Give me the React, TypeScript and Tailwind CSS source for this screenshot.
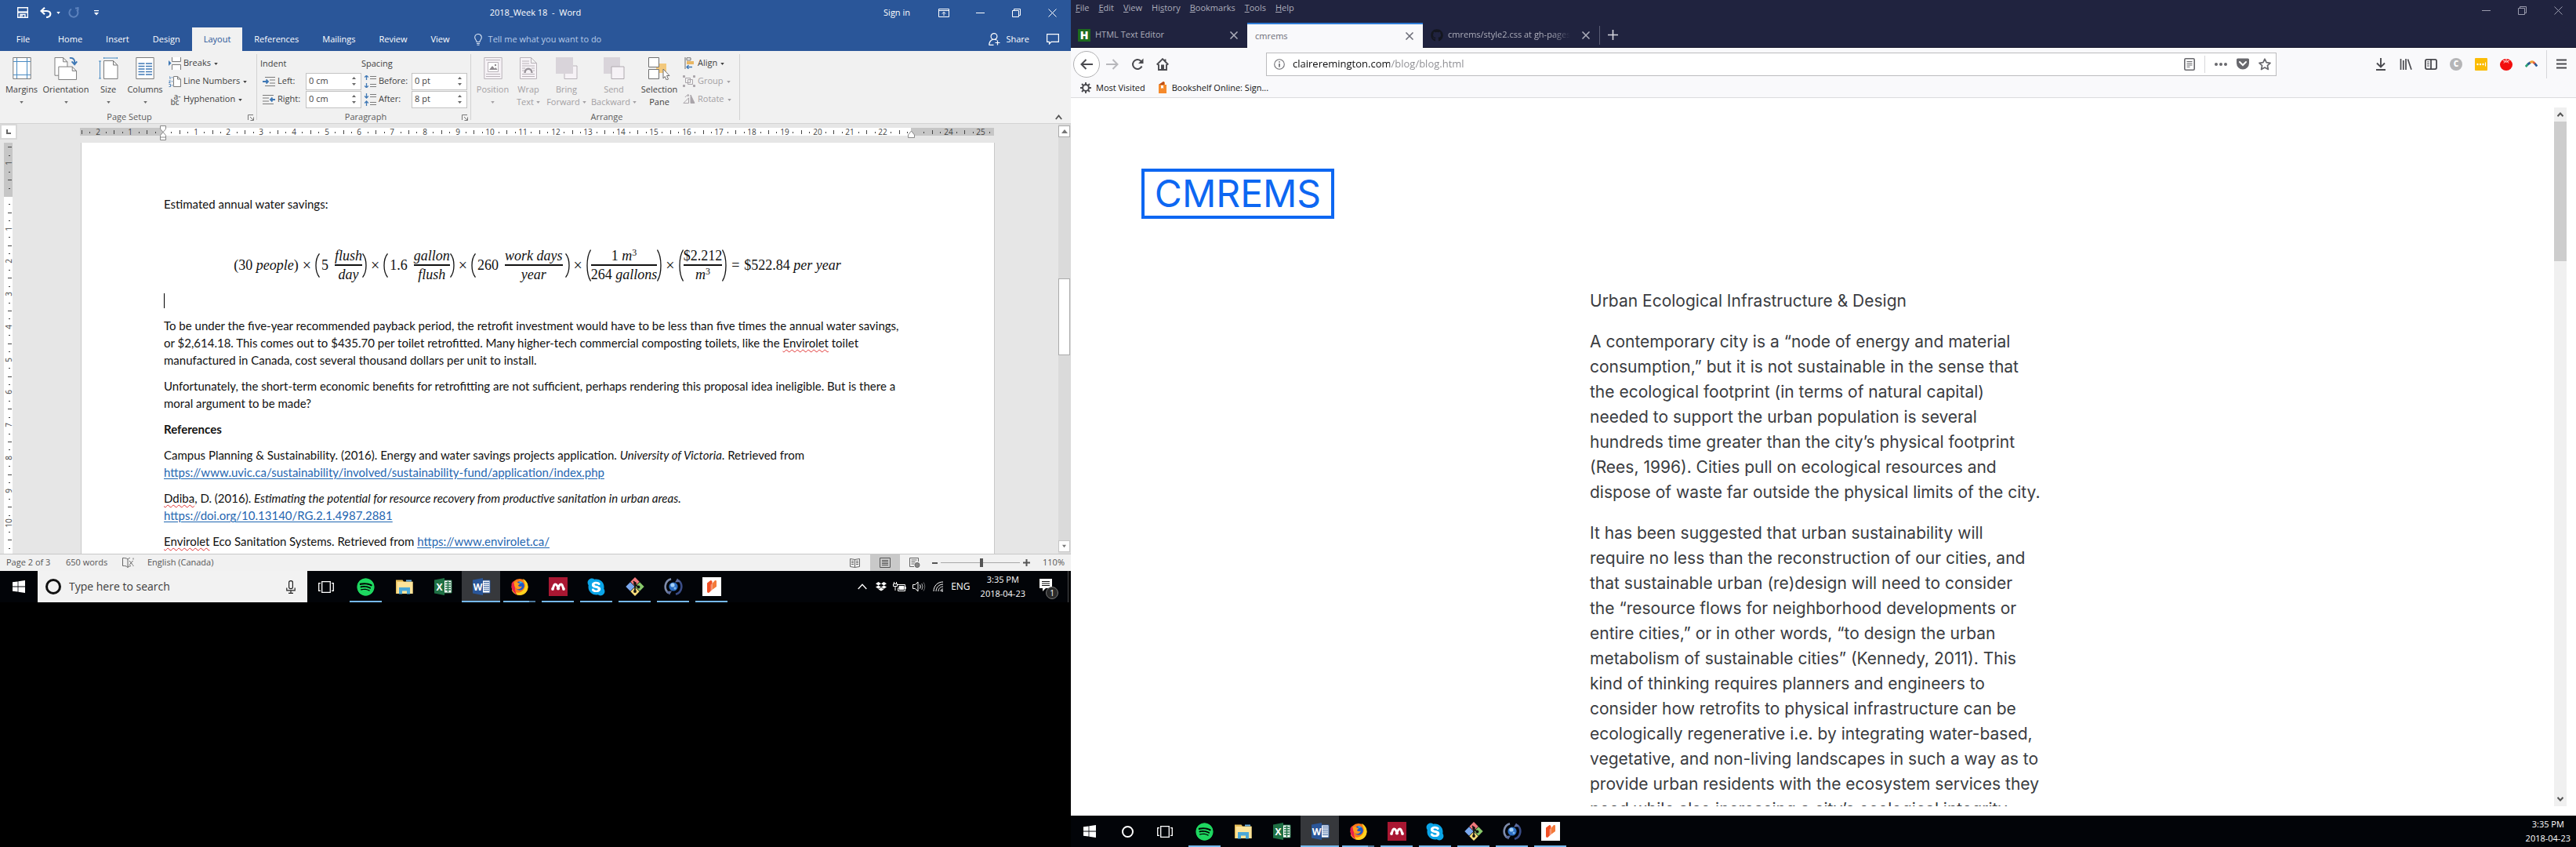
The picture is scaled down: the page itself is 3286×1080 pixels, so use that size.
import React from 'react';
import { FaSpotify, FaSkype, FaGithub } from 'react-icons/fa';

type IconProps = { className?: string };

/* ---------- shared glyphs ---------- */

const CaretDown = ({ className = '' }: IconProps) => (
  <svg viewBox="0 0 6 4" className={`inline-block h-[3px] w-[5px] shrink-0 ${className}`} fill="currentColor"><path d="M0 0h6L3 4z" /></svg>
);
const MinimizeIcon = () => (
  <svg viewBox="0 0 11 11" className="h-[11px] w-[11px]" stroke="currentColor"><path d="M0 5.5h11" /></svg>
);
const RestoreIcon = () => (
  <svg viewBox="0 0 11 11" className="h-[11px] w-[11px]" stroke="currentColor" fill="none"><path d="M.5 2.5h8v8h-8zM2.5 2.5v-2h8v8h-2" /></svg>
);
const CloseIcon = ({ className = 'h-[11px] w-[11px]' }: IconProps) => (
  <svg viewBox="0 0 11 11" className={className} stroke="currentColor" fill="none"><path d="M.5.5l10 10M10.5.5l-10 10" /></svg>
);

/* ---------- taskbar ---------- */

const WindowsLogo = () => (
  <svg viewBox="0 0 16 16" className="h-4 w-4" fill="#fff"><path d="M0 2.3l6.6-.9v6.2H0zM7.4 1.3L16 0v7.6H7.4zM0 8.4h6.6v6.2L0 13.7zM7.4 8.4H16V16l-8.6-1.3z" /></svg>
);
const TaskViewIcon = () => (
  <svg viewBox="0 0 20 15" className="h-[15px] w-5" fill="none" stroke="#fff" strokeWidth="1.3"><path d="M4.7.7h10.6v13.6H4.7zM3 2.7H.7v9.6H3M17 2.7h2.3v9.6H17" /></svg>
);
const SpotifyIcon = () => (
  <span className="flex h-6 w-6 items-center justify-center"><FaSpotify className="h-[23px] w-[23px] rounded-full bg-black text-[#1ed760]" /></span>
);
const ExplorerIcon = () => (
  <svg viewBox="0 0 24 24" className="h-6 w-6"><path d="M1 3.5h8.5l1.5 2h11.5V21H1z" fill="#e8bf5a" /><path d="M2.5 6h20v15h-20z" fill="#fde49a" /><path d="M14 3.5h7v2h-7z" fill="#6fb6e8" /><path d="M5 13h14v8.5h-4v-4H9v4H5z" fill="#4aa8d8" /></svg>
);
const OfficeIcon = ({ letter, dark, lines }: { letter: string; dark: string; lines: React.ReactNode }) => (
  <svg viewBox="0 0 24 24" className="h-6 w-6"><path d="M13 4h10v16H13z" fill="#fff" stroke={dark} />{lines}<path d="M1 3.6L14 1v22L1 20.4z" fill={dark} /><text x="7.5" y="16.5" textAnchor="middle" fontSize="12" fontWeight="700" fill="#fff" fontFamily="Open Sans, sans-serif">{letter}</text></svg>
);
const ExcelIcon = () => (
  <OfficeIcon letter="X" dark="#1f7145" lines={<path d="M15 7h7M15 10h7M15 13h7M15 16h7M18.5 5v14" stroke="#1f7145" strokeWidth="1.4" />} />
);
const WordIcon = () => (
  <OfficeIcon letter="W" dark="#2a5699" lines={<path d="M15 6.5h7M15 9h7M15 11.5h7M15 14h7M15 16.5h7" stroke="#2a5699" strokeWidth="1.1" />} />
);
const FirefoxIcon = () => (
  <svg viewBox="0 0 24 24" className="h-6 w-6">
    <circle cx="12" cy="12.5" r="10.5" fill="#ff7a18" />
    <path d="M16 2c4 2 7 6 6.5 11C22 19 17 23 12 23c-5 0-9-3-10.3-7 4 4 9 5 13 2 4-3 5-8 3-12-.4-1.5-1-3-1.7-4z" fill="#ffd21e" />
    <path d="M1.6 8C1 14 3 20 9 22.5c-3-3-3-6-3-9C6 10 4 9 4 5 3 6 2 7 1.6 8z" fill="#e8214a" />
    <circle cx="12" cy="11" r="5.8" fill="#1e58c8" />
    <path d="M11 5.3c2 0 4 .6 5 2-1.5-.3-3 0-3.5 1z" fill="#2fb5ef" />
    <path d="M5 7c2-1.5 4-1 5 .5 1 0 2 .3 2 1-.5 1-2 1.5-2 2 .5 1.5 3 2 5 1-1 3-4 4.5-6.5 3.5C6 14 4.5 10.5 5 7z" fill="#ff9a1e" />
  </svg>
);
const MendeleyIcon = () => (
  <svg viewBox="0 0 24 24" className="h-6 w-6"><path d="M0 0h24v24H0z" fill="#a91732" /><path d="M5 14.5c1.500-1.500 1-5.500 3.500-5.500s2 3.500 3.500 3.500S13 9 15.500 9s2 4 3.500 5.500" fill="none" stroke="#fff" strokeWidth="3" /><circle cx="5" cy="15" r="1.900" fill="#fff" /><circle cx="12" cy="14.500" r="2.100" fill="#fff" /><circle cx="19" cy="15" r="1.900" fill="#fff" /></svg>
);
const SkypeIcon = () => (
  <span className="flex h-6 w-6 items-center justify-center"><FaSkype className="h-[25px] w-[23px] bg-[radial-gradient(#fff_8px,transparent_9px)] text-[#0aa5e8]" /></span>
);
const GitIcon = () => (
  <svg viewBox="0 0 24 24" className="h-6 w-6"><path d="M12 0l5.700 5.700L12 11.400 6.300 5.700z" fill="#f0797c" /><path d="M6 6.300l5.700 5.700L6 17.700.3 12z" fill="#7aa8ee" /><path d="M18 6.300l5.700 5.700-5.700 5.700-5.700-5.700z" fill="#88c86a" /><path d="M12 12.600l5.700 5.700L12 24l-5.700-5.700z" fill="#f7dc7a" /><path d="M10 5l2 2v12M12 9.500l4.500 3" stroke="#111" strokeWidth="1.600" fill="none" /><circle cx="12" cy="8" r="1.900" fill="#111" /><circle cx="12" cy="18" r="1.900" fill="#111" /><circle cx="16.500" cy="12.500" r="1.900" fill="#111" /></svg>
);
const SyncIcon = () => (
  <svg viewBox="0 0 24 24" className="h-6 w-6"><circle cx="12" cy="12" r="5.600" fill="#2c6fc4" /><circle cx="11" cy="10" r="2.600" fill="#a5d1f7" /><circle cx="14" cy="14" r="1.500" fill="#7db8ee" /><g fill="none" strokeWidth="2.600"><path d="M9 2.200A10.200 10.200 0 0 0 6 20.300" stroke="#7d8bab" /><path d="M15 21.800A10.200 10.200 0 0 0 18 3.700" stroke="#3a4c86" /></g><path d="M3 18l7-.5-3 5zM21 6l-7 .5 3-5z" fill="#5c6c9c" /></svg>
);
const NitroIcon = () => (
  <svg viewBox="0 0 24 24" className="h-6 w-6"><path d="M0 0h24v24H0z" fill="#fff" /><path d="M6 7.500l4.500-3.500c1.500 0 2 1 2 2v10L8 20c-1.500 0-2-.8-2-2z" fill="#f04e23" /><path d="M12.500 8v8l5.500-4V5.500C18 4 17 3.700 16 4z" fill="#f47a3a" /><path d="M12.500 8v8L10.500 18V9.500z" fill="#fff" opacity=".35" /></svg>
);

const APPS = [
  { name: 'Spotify', icon: <SpotifyIcon />, state: 'open' },
  { name: 'File Explorer', icon: <ExplorerIcon />, state: 'idle' },
  { name: 'Excel', icon: <ExcelIcon />, state: 'idle' },
  { name: 'Word', icon: <WordIcon />, state: 'active' },
  { name: 'Firefox', icon: <FirefoxIcon />, state: 'stacked' },
  { name: 'Mendeley', icon: <MendeleyIcon />, state: 'open' },
  { name: 'Skype', icon: <SkypeIcon />, state: 'open' },
  { name: 'Git', icon: <GitIcon />, state: 'open' },
  { name: 'Sync', icon: <SyncIcon />, state: 'open' },
  { name: 'Nitro', icon: <NitroIcon />, state: 'open' },
];

const TaskbarApps = () => (
  <div className="ml-0.5 flex">
    {APPS.map((a) => (
      <button key={a.name} aria-label={a.name} className={`relative flex h-10 w-[49px] items-center justify-center ${a.state === 'active' ? 'bg-[#36383c]' : ''}`}>
        {a.icon}
        {a.state === 'active' && <span className="absolute inset-x-0 bottom-0 h-0.5 bg-[#76b9ed]" />}
        {(a.state === 'open' || a.state === 'stacked') && <span className="absolute inset-x-1 bottom-0 h-0.5 bg-[#76b9ed]" />}
        {a.state === 'stacked' && <span className="absolute right-1 bottom-0 h-0.5 w-2 bg-[#4c789c]" />}
      </button>
    ))}
  </div>
);

const Clock = ({ className = '' }: IconProps) => (
  <div className={`text-center text-[11px] leading-[18px] text-white ${className}`}><div>3:35 PM</div><div>2018-04-23</div></div>
);

const LeftTaskbar = () => (
  <div className="flex h-10 items-center bg-[#020408]">
    <button aria-label="Start" className="flex h-10 w-12 items-center justify-center"><WindowsLogo /></button>
    <label className="flex h-10 w-[344px] items-center bg-[#f2f2f2] pr-[15px]">
      <span className="ml-2.5 h-5 w-5 shrink-0 rounded-full border-[3px] border-[#111]" />
      <input aria-label="Search" placeholder="Type here to search" className="ml-2.5 min-w-0 flex-1 bg-transparent text-sm text-[#333] outline-none placeholder:text-[#3c3c3c]" />
      <svg viewBox="0 0 12 17" className="h-[17px] w-3" fill="none" stroke="#222" strokeWidth="1.200"><rect x="3.600" y=".7" width="4.800" height="10" rx="2.200" /><path d="M.8 9.500v3.300h10.400V9.500M6 12.800v3.500M3 16.300h6" /></svg>
    </label>
    <button aria-label="Task view" className="flex h-10 w-12 items-center justify-center"><TaskViewIcon /></button>
    <TaskbarApps />
    <div className="ml-auto flex items-center text-white">
      <svg viewBox="0 0 12 8" className="h-2 w-3" fill="none" stroke="#fff" strokeWidth="1.300"><path d="M.7 7L6 1.200 11.300 7" /></svg>
      <svg viewBox="0 0 14 12" className="ml-[11px] h-3 w-3.5" fill="#fff"><path d="M3.500 0L7 2.200 3.500 4.400 0 2.200zM10.500 0L14 2.200l-3.500 2.200L7 2.200zM3.500 4.400L7 6.600 3.500 8.800 0 6.600zM10.500 4.400L14 6.600l-3.500 2.200L7 6.600zM3.500 9.400L7 7.300l3.500 2.100L7 11.600z" /></svg>
      <svg viewBox="0 0 17 12" className="ml-2 h-3 w-[17px]" fill="none" stroke="#fff"><path d="M5.500 3.500h10v8h-9v-4" /><path d="M16 6v3" strokeWidth="1.500" /><path d="M8 5.500h6v4H8z" fill="#fff" /><path d="M1.500 0v2M4.500 0v2M.5 2.500h5v3h-5zM3 5.500v5.500" /></svg>
      <svg viewBox="0 0 17 14" className="ml-2 h-3.5 w-[17px]" fill="none" stroke="#fff"><path d="M.5 4.500h3l3.500-3.500v12l-3.500-3.500h-3z" /><path d="M9.500 4.500q1.600 2.500 0 5" /><path d="M11.800 3q2.500 4 0 8" opacity=".7" /><path d="M14 1.500q3.500 5.500 0 11" opacity=".4" /></svg>
      <svg viewBox="0 0 14 14" className="ml-[9px] h-3.5 w-3.5" fill="none" stroke="#fff"><path d="M1 13C1 6 6 1 13 1M4 13c0-5 4-9 9-9M7 13c0-3.500 2.500-6 6-6" /><path d="M10 13c0-2 1-3 3-3" /><circle cx="12" cy="12.500" r="1" fill="#fff" stroke="none" /></svg>
      <span className="ml-[9px] text-xs">ENG</span>
      <Clock className="ml-[13px]" />
      <button aria-label="Notifications" className="relative ml-4 h-8 w-7">
        <svg viewBox="0 0 16 17" className="absolute top-1.5 left-0.5 h-[17px] w-4"><path d="M0 0h16v12H8l-4 4v-4H0z" fill="#fff" /><path d="M3 3.500h10M3 6h10M3 8.500h10" stroke="#111" /></svg>
        <span className="absolute right-0.5 bottom-0 flex h-4 w-4 items-center justify-center rounded-full border border-[#777] bg-[#2a2a2a] text-[10px] leading-none">1</span>
      </button>
      <span className="mr-[3px] ml-2.5 h-10 w-px bg-[#4a4a4a]" />
    </div>
  </div>
);

const RightTaskbar = () => (
  <div className="flex h-10 shrink-0 items-center bg-[#020408]">
    <button aria-label="Start" className="flex h-10 w-12 items-center justify-center"><WindowsLogo /></button>
    <button aria-label="Cortana" className="flex h-10 w-12 items-center justify-center"><span className="h-[15px] w-[15px] rounded-full border-2 border-white" /></button>
    <button aria-label="Task view" className="flex h-10 w-12 items-center justify-center"><TaskViewIcon /></button>
    <TaskbarApps />
    <Clock className="mr-[7px] ml-auto" />
  </div>
);

/* ---------- Word: title bar and tabs ---------- */

const WordTitleBar = () => (
  <div className="grid h-[35px] grid-cols-[1fr_auto_1fr] items-center pb-[3px] text-[11px] text-white">
    <div className="flex items-center pl-[22px]">
      <button aria-label="Save"><svg viewBox="0 0 14 14" className="h-3.5 w-3.5" fill="none" stroke="#fff" strokeWidth="1.400"><path d="M.7.700h12.600v12.600H.7z" /><path d="M.7 6.500h12.600" strokeWidth="2.200" /><path d="M4 13V9.500h6V13" /><path d="M6 10v2.500" /></svg></button>
      <button aria-label="Undo" className="ml-[15px] flex items-center"><svg viewBox="0 0 15 14" className="h-3.5 w-[15px]" fill="none" stroke="#fff" strokeWidth="2.200"><path d="M6 .8L1.500 5 6 9.200M2 5h6.500c7 0 6 8-.5 8" /></svg><CaretDown className="ml-1.5" /></button>
      <button aria-label="Redo" className="ml-2.5"><svg viewBox="0 0 14 14" className="h-3.5 w-3.5" fill="none" stroke="#5c82bd" strokeWidth="2"><path d="M9 1.500h4M12.500 0v4.500M11 3.500A5.500 5.500 0 1 1 4 2.500" /></svg></button>
      <button aria-label="Customize toolbar" className="ml-[19px]"><svg viewBox="0 0 6 7" className="h-[7px] w-1.5" fill="#fff"><path d="M0 0h6v1.200H0zM0 3h6L3 6.500z" /></svg></button>
    </div>
    <div className="whitespace-pre">2018_Week 18  -  Word</div>
    <div className="flex items-center justify-end pr-[18px]">
      <button className="mr-9">Sign in</button>
      <button aria-label="Ribbon options" className="mr-[34px]"><svg viewBox="0 0 14 11" className="h-[11px] w-3.5" fill="none" stroke="#fff"><path d="M.5.500h13v10H.5zM.5 2.500h13M7 9V4.500M4.800 6.500L7 4.300l2.200 2.200" /></svg></button>
      <button aria-label="Minimize" className="mr-[35px]"><MinimizeIcon /></button>
      <button aria-label="Restore" className="mr-[35px]"><RestoreIcon /></button>
      <button aria-label="Close"><CloseIcon /></button>
    </div>
  </div>
);

const WORD_TABS = ['Home', 'Insert', 'Design', 'Layout', 'References', 'Mailings', 'Review', 'View'];

const WordTabs = () => (
  <div className="flex h-[30px] items-stretch text-[11px] text-white">
    <button className="w-[59px]">File</button>
    {WORD_TABS.map((t) => (
      <button key={t} className={`px-[15px] ${t === 'Layout' ? 'bg-[#f1f1f1] text-[#2a5699]' : ''}`}>{t}</button>
    ))}
    <button className="ml-4 flex items-center gap-2 text-[#b8cbe8]">
      <svg viewBox="0 0 10 15" className="h-[15px] w-2.5" fill="none" stroke="#dbe6f5" strokeWidth="1.100"><path d="M3 10.500C3 8 .7 7.500.7 4.800a4.300 4.300 0 0 1 8.600 0C9.300 7.500 7 8 7 10.500zM3 12.500h4M3.500 14.300h3" /></svg>
      Tell me what you want to do
    </button>
    <button className="ml-auto flex items-center gap-[7px]">
      <svg viewBox="0 0 15 16" className="h-4 w-[15px]" fill="none" stroke="#fff" strokeWidth="1.200"><circle cx="7" cy="4.500" r="3.900" /><path d="M.7 15.500C1 11 3 9 5.500 8.300M8.500 8.300l2 1M.7 15.300h5.800M11.500 9.500v6M8.500 12.500h6" /></svg>
      Share
    </button>
    <button aria-label="Comments" className="mr-[15px] ml-[22px]"><svg viewBox="0 0 16 14" className="h-3.5 w-4" fill="none" stroke="#fff" strokeWidth="1.200"><path d="M.6.600h14.800v9.800H6L3.500 13v-2.600H.6z" /></svg></button>
  </div>
);

/* ---------- Word: ribbon ---------- */

const PageGlyph = ({ children, muted }: { children?: React.ReactNode; muted?: boolean }) => (
  <svg viewBox="0 0 24 28" className="h-7 w-6" fill="#fff" stroke={muted ? '#b9b3b9' : '#7a7a7a'}><path d="M.8.500h22.400v27H.8z" fill={muted ? '#f6f2f6' : '#fff'} />{children}</svg>
);
const MarginsIcon = () => <PageGlyph><path d="M5.500 1v26M18.500 1v26M1 5.500h22M1 22.500h22" stroke="#4a8bc2" /></PageGlyph>;
const OrientationIcon = () => (
  <svg viewBox="0 0 30 30" className="h-[29px] w-[30px]" fill="#fff" stroke="#7a7a7a"><path d="M.5.500h11l5.500 5.500v18H.5zM11.500.500v5.500H17" /><path d="M5.500 12.500h18l5.500 5.500v11.500H5.500zM23.500 12.500v5.500H29" /><path d="M20 .8c5 0 7 2 6.500 7M22.800 5.500l3.700 4 3.200-4" fill="none" stroke="#3f78b5" strokeWidth="2" /></svg>
);
const SizeIcon = () => (
  <svg viewBox="0 0 25 28" className="h-7 w-[25px]" fill="#fff" stroke="#7a7a7a"><path d="M6.500 4.500h12l5.500 5.500v17.500H6.500zM18.500 4.500v5.500H24" /><path d="M6 1h18M6.500 0v2M23.500 0v2M1.500 5v22M0 5h3M0 27h3" stroke="#4a8bc2" fill="none" /></svg>
);
const ColumnsIcon = () => <PageGlyph><path d="M3.500 8h8M3.500 11.500h8M3.500 15h8M3.500 18.500h8M3.500 22h8M13 8h8M13 11.500h8M13 15h8M13 18.500h8M13 22h8" stroke="#3f78b5" strokeWidth="1.300" /></PageGlyph>;
const PositionIcon = () => <PageGlyph muted><path d="M3 3.500h18M3 21.500h18M3 24.500h18" /><path d="M5.500 6.500h13v12h-13z" /><path d="M7 16l4-5 3 3.500 1.500-1.500 2 3z" fill="#8f8a8f" stroke="none" /><circle cx="15" cy="10" r="1.200" fill="#8f8a8f" stroke="none" /></PageGlyph>;
const WrapIcon = () => (
  <svg viewBox="0 0 22 28" className="h-7 w-[22px]" fill="#f6f2f6" stroke="#b9b3b9"><path d="M.5.500h14l7 7v20H.5zM14.500.500v7h7" /><path d="M3 5h9M3 8h9M3 11h16M3 14h4M15 14h4M3 17h3M17 17h2M3 21.500h16M3 24.500h16" /><path d="M6.500 20c0-7 9-7 9 0" fill="none" stroke="#99949a" strokeWidth="2.500" /></svg>
);
const ForwardIcon = () => (
  <svg viewBox="0 0 28 28" className="h-7 w-7"><path d="M11 11h16v16.500H11z" fill="#f6f2f6" stroke="#b9b3b9" /><path d="M0 0h22v21H0z" fill="#d9d4da" /></svg>
);
const BackwardIcon = () => (
  <svg viewBox="0 0 28 28" className="h-7 w-7"><path d="M1 0h21v21H1z" fill="#d9d4da" /><path d="M11 12h16v15.500H11z" fill="#f6f2f6" stroke="#b0aab0" /></svg>
);
const SelectionIcon = () => (
  <svg viewBox="0 0 28 29" className="h-[29px] w-7"><path d="M10 8h13v12H10z" fill="#f2c87c" /><path d="M.5.500h13v12H.5zM.5 15.500h13v12H.5z" fill="#fff" stroke="#6f6f6f" /><path d="M19 15l8 8.500h-3.500l2 4.500-2.300 1-2-4.500L19 27z" fill="#fff" stroke="#6f6f6f" /></svg>
);

const BigButton = ({ icon, lines, width, muted, trailing }: { icon: React.ReactNode; lines: string[]; width: string; muted?: boolean; trailing?: boolean }) => (
  <button className={`flex flex-col items-center pt-2 text-[11px] leading-4 ${width} ${muted ? 'text-[#a3a0a3]' : 'text-[#3f3f3f]'}`}>
    <span className="mb-[5px] flex h-7 items-start">{icon}</span>
    <span>{lines[0]}</span>
    <span className="flex h-4 items-center gap-[3px]">
      {lines[1]}
      {trailing && <CaretDown className={muted ? '' : 'text-[#6a6a6a]'} />}
    </span>
  </button>
);

const SmallButton = ({ icon, label, muted }: { icon: React.ReactNode; label: string; muted?: boolean }) => (
  <button className={`flex h-[23px] items-center text-[11px] ${muted ? 'text-[#a3a0a3]' : 'text-[#3f3f3f]'}`}>
    <span className="mr-[3px] flex w-4 justify-center">{icon}</span>{label}<CaretDown className="mt-px ml-1" />
  </button>
);

const Group = ({ label, width, launcher, children }: { label: string; width: string; launcher?: boolean; children: React.ReactNode }) => (
  <section className={`relative flex flex-col ${width}`}>
    <div className="flex flex-1">{children}</div>
    <div className="relative pb-px text-center text-[11px] leading-[14px] text-[#5c5c5c]">
      {label}
      {launcher && (
        <button aria-label={`${label} settings`} className="absolute top-1 right-1"><svg viewBox="0 0 8 8" className="h-2 w-2" fill="none" stroke="#777"><path d="M.5 7V.500H7M3 3l4 4M7.500 3.500v4h-4" /></svg></button>
      )}
    </div>
    <span className="absolute top-1 right-0 bottom-1 w-px bg-[#d2d2d2]" />
  </section>
);

const BreaksIcon = () => <svg viewBox="0 0 16 16" className="h-4 w-4" fill="#fff" stroke="#7a7a7a"><path d="M4.500 0v5.500h11V0M4.500 16V9.500h11V16" /><path d="M0 4v7l3.500-3.500z" fill="#3f78b5" stroke="none" /></svg>;
const LineNumbersIcon = () => <svg viewBox="0 0 16 14" className="h-3.5 w-4" fill="#fff" stroke="#7a7a7a"><path d="M6.500.500h5l4 3.500v9.500h-9zM11.500.500V4h4" /><path d="M1 1h1v3M.5 6h2l-2 2.500h2M.5 10.500h2v3h-2M4.500 1v1.500M4.500 6v1.500M4.500 11v1.500" fill="none" stroke="#3f78b5" strokeWidth=".9" /></svg>;
const HyphenIcon = () => (
  <span className="flex flex-col text-[10px] leading-[7px] font-semibold text-[#6a6a6a]"><span className="pl-1.5">a-</span><span>bc</span></span>
);
const AlignIcon = () => <svg viewBox="0 0 12 15" className="h-[15px] w-3"><path d="M1 0v15" stroke="#6f6f6f" /><path d="M3 .800h5v3H3z" fill="#fff" stroke="#6f6f6f" /><path d="M3 5h9v4H3z" fill="#e8b765" /><path d="M10 12.500H3M5.500 10L3 12.500 5.500 15" stroke="#3f78b5" fill="none" strokeWidth="1.400" /></svg>;
const GroupIcon = () => <svg viewBox="0 0 16 15" className="h-[15px] w-4" fill="none" stroke="#aaa5aa"><path d="M3.500 3.500h6v6h-6zM6.500 5.500h6v6h-6z" /><path d="M.5.500h2v2h-2zM13.500.500h2v2h-2zM.5 12.500h2v2h-2zM13.500 12.500h2v2h-2z" fill="#aaa5aa" /></svg>;
const RotateIcon = () => <svg viewBox="0 0 16 13" className="h-[13px] w-4" fill="none" stroke="#aaa5aa"><path d="M.8 11.500L7.500 5v6.500zM3 4c1-2 2.500-2.500 4.500-2.500M6 0l2 1.500L6 3" /><path d="M10 1v10.500h5z" fill="#aaa5aa" /></svg>;

const IndentGlyph = ({ right }: { right?: boolean }) => (
  <svg viewBox="0 0 16 12" className="h-3 w-4" fill="none" stroke="#7a7a7a"><path d={right ? 'M0 .500h14M0 4h8M0 8h8M0 11.500h14' : 'M3 .500h13M9 4h7M9 8h7M3 11.500h13'} /><path d={right ? 'M16 6h-5M12.500 3.500L10 6l2.500 2.500' : 'M0 6h6M4.500 3.500L7 6 4.500 8.500'} stroke="#3f78b5" strokeWidth="1.800" /></svg>
);
const SpacingGlyph = ({ after }: { after?: boolean }) => (
  <svg viewBox="0 0 16 16" className="h-4 w-4" fill="none" stroke="#7a7a7a"><path d="M8 1.500h8M8 4.500h8M8 11.500h8M8 14.500h8" /><path d={after ? 'M3.500 0v6M1.200 3.500L3.500 6l2.300-2.500M3.500 16v-6M1.200 12.500L3.500 10l2.300 2.500' : 'M3.500 6V0M1.200 2.500L3.500.300l2.300 2.200M3.500 10v6M1.200 13.500l2.300 2.200 2.300-2.200'} stroke="#3f78b5" strokeWidth="1.300" /></svg>
);

const SpinField = ({ id, label, labelWidth, value, icon }: { id: string; label: string; labelWidth: string; value: string; icon: React.ReactNode }) => (
  <div className="flex h-[23px] items-center pl-[3px]">
    {icon}
    <label htmlFor={id} className={`pl-[3px] ${labelWidth}`}>{label}</label>
    <div className="flex h-[22px] w-[71px] items-center border border-[#c3c3c3] bg-white pr-1.5 pl-[3px]">
      <input id={id} defaultValue={value} className="w-full min-w-0 flex-1 text-[11px] outline-none" />
      <svg viewBox="0 0 6 13" className="h-[13px] w-[5px]" fill="#666"><path d="M0 3.500L3 0l3 3.500zM0 9.500h6L3 13z" /></svg>
    </div>
  </div>
);

const Ribbon = () => (
  <div className="flex h-[93px] border-b border-[#d2d2d2] bg-[#f1f1f1]">
    <Group label="Page Setup" width="w-[328px] pl-0.5" launcher>
      <BigButton icon={<MarginsIcon />} lines={['Margins']} width="w-[51px]" trailing />
      <BigButton icon={<OrientationIcon />} lines={['Orientation']} width="w-[62px]" trailing />
      <BigButton icon={<SizeIcon />} lines={['Size']} width="w-[46px]" trailing />
      <BigButton icon={<ColumnsIcon />} lines={['Columns']} width="w-12" trailing />
      <div className="flex flex-col items-start pt-1 pl-1.5">
        <SmallButton icon={<BreaksIcon />} label="Breaks" />
        <SmallButton icon={<LineNumbersIcon />} label="Line Numbers" />
        <SmallButton icon={<HyphenIcon />} label="Hyphenation" />
      </div>
    </Group>
    <Group label="Paragraph" width="w-[273px] pl-1" launcher>
      <div className="flex pt-1 text-[11px] text-[#3f3f3f]">
        <div className="w-[129px]">
          <div className="h-[23px] leading-[23px]">Indent</div>
          <SpinField id="indent-left" label="Left:" labelWidth="w-[39px]" value="0 cm" icon={<IndentGlyph />} />
          <SpinField id="indent-right" label="Right:" labelWidth="w-[39px]" value="0 cm" icon={<IndentGlyph right />} />
        </div>
        <div>
          <div className="h-[23px] leading-[23px]">Spacing</div>
          <SpinField id="space-before" label="Before:" labelWidth="w-[45px]" value="0 pt" icon={<SpacingGlyph />} />
          <SpinField id="space-after" label="After:" labelWidth="w-[45px]" value="8 pt" icon={<SpacingGlyph after />} />
        </div>
      </div>
    </Group>
    <Group label="Arrange" width="w-[343px] pl-[3px]">
      <BigButton muted icon={<PositionIcon />} lines={['Position']} width="w-[49px]" trailing />
      <BigButton muted icon={<WrapIcon />} lines={['Wrap', 'Text']} width="w-[42px]" trailing />
      <BigButton muted icon={<ForwardIcon />} lines={['Bring', 'Forward']} width="w-[55px]" trailing />
      <BigButton muted icon={<BackwardIcon />} lines={['Send', 'Backward']} width="w-[66px]" trailing />
      <BigButton icon={<SelectionIcon />} lines={['Selection', 'Pane']} width="w-[50px]" />
      <div className="flex flex-col items-start pt-1 pl-[5px]">
        <SmallButton icon={<AlignIcon />} label="Align" />
        <SmallButton muted icon={<GroupIcon />} label="Group" />
        <SmallButton muted icon={<RotateIcon />} label="Rotate" />
      </div>
    </Group>
    <button aria-label="Collapse ribbon" className="mt-auto mr-[11px] mb-1 ml-auto"><svg viewBox="0 0 9 7" className="h-[7px] w-[9px]" fill="none" stroke="#555" strokeWidth="1.800"><path d="M.8 6l3.700-4.500L8.200 6" /></svg></button>
  </div>
);

/* ---------- Word: rulers ---------- */

const UNIT = 41.73;
const range = (from: number, to: number) => Array.from({ length: to - from + 1 }, (_, i) => from + i);

const HorizontalRuler = () => (
  <svg width="1168" height="24" className="ml-[80px] block shrink-0" fontFamily="Open Sans, sans-serif" fontSize="10" fill="#444">
    <path d="M0 5h106v10H0zM1060 5h106v10h-106z" fill="#c6c6c6" />
    <path d="M106 5h954v10H106z" fill="#fff" />
    {range(-10, 101).map((q) => {
      const x = Math.round(106 + (q * UNIT) / 4);
      const n = Math.abs(q / 4);
      if (q === 0 || q === 92 || x > 1162 || x < 1) return null;
      if (q % 4 === 0) return <text key={q} x={x} y="13.500" textAnchor="middle">{n}</text>;
      if (q % 2 === 0) return <path key={q} d={`M${x} 8h1v5h-1z`} />;
      return <path key={q} d={`M${x} 10h1v2h-1z`} />;
    })}
    <path d="M102.500 2.500h7v4l-3.500 4 3.500 4v6h-7v-6l3.500-4-3.500-4zM102.500 17h7" fill="#fff" stroke="#888" />
    <path d="M1056.500 17.500v-3.500l4-5 4 5v3.500z" fill="#fff" stroke="#888" />
  </svg>
);

const VerticalRuler = () => (
  <svg width="16" height="524" className="block h-full" fontFamily="Open Sans, sans-serif" fontSize="10" fill="#444">
    <path d="M5 0h11v69H5z" fill="#c6c6c6" />
    <path d="M5 69h11v455H5z" fill="#fff" />
    {range(-6, 43).map((q) => {
      const y = Math.round(68 + (q * UNIT) / 4);
      if (q === 0) return null;
      if (q % 4 === 0) return <text key={q} textAnchor="middle" transform={`translate(14.500 ${y}) rotate(-90)`}>{Math.abs(q / 4)}</text>;
      if (q % 2 === 0) return <path key={q} d={`M10 ${y}h5v1h-5z`} />;
      return <path key={q} d={`M11 ${y}h2v1h-2z`} />;
    })}
  </svg>
);

/* ---------- Word: equation ---------- */

const Paren = ({ close, tall }: { close?: boolean; tall?: boolean }) => (
  <svg viewBox="0 0 6 40" preserveAspectRatio="none" className={`w-1.5 ${tall ? 'h-[41px]' : 'h-[31px]'}`} fill="none" stroke="#111" strokeWidth="1.300"><path d={close ? 'M.5.500C6.500 10 6.500 30 .5 39.500' : 'M5.500.500C-.5 10-.5 30 5.500 39.500'} /></svg>
);
const Frac = ({ top, bottom, wide }: { top: React.ReactNode; bottom: React.ReactNode; wide?: boolean }) => (
  <span className={`flex flex-col items-center ${wide ? 'mr-[3px]' : ''}`}>
    <span className="h-[21px] leading-[20px]">{top}</span>
    <span className="h-0.5 self-stretch bg-[#111]" />
    <span className="h-[21px] leading-[22px]">{bottom}</span>
  </span>
);
const Cubed = () => <span><i>m</i><sup className="text-xs leading-none">3</sup></span>;
const Times = () => <span className="mx-[5px] text-xl">×</span>;

const Equation = () => (
  <div className="mt-[45px] mr-[106px] flex h-11 items-center justify-center font-['Liberation_Serif',serif] text-[18px] whitespace-pre text-[#111]">
    <span>(30 <i>people</i>)</span><Times />
    <Paren /><span className="mr-2 ml-0.5">5</span><Frac top={<i>flush</i>} bottom={<i>day</i>} /><Paren close /><Times />
    <Paren /><span className="mr-2 ml-0.5">1.6</span><Frac top={<i>gallon</i>} bottom={<i>flush</i>} /><Paren close /><Times />
    <Paren /><span className="mr-2 ml-0.5">260</span><Frac top={<i>work days</i>} bottom={<i>year</i>} wide /><Paren close /><Times />
    <Paren tall /><Frac top={<>1 <Cubed /></>} bottom={<>264 <i>gallons</i></>} /><Paren close tall /><Times />
    <Paren tall /><Frac top="$2.212" bottom={<Cubed />} /><Paren close tall />
    <span className="mx-1.5">=</span><span>$522.84 <i>per year</i></span>
  </div>
);

/* ---------- Word: document ---------- */

const Misspelt = ({ children }: { children: React.ReactNode }) => (
  <span className="underline decoration-[#e03131] decoration-wavy decoration-1 underline-offset-2">{children}</span>
);
const DocLink = ({ href }: { href: string }) => (
  <a href={href} className="text-[#1f66b1] underline underline-offset-2">{href}</a>
);

const DocumentPage = () => (
  <div className="flex-1 overflow-hidden border-x border-[#c8c8c8] bg-white pt-[67px] pb-[5px] pl-[105px] font-['Lato',sans-serif] text-[15px] leading-[22px] whitespace-nowrap text-[#111]">
    <p>Estimated annual water savings:</p>
    <Equation />
    <div className="mt-3.5 h-[19px] w-px bg-black" />
    <div className="mt-[11px] flex flex-col gap-[11px]">
      <p>To be under the five-year recommended payback period, the retrofit investment would have to be less than five times the annual water savings,<br />or $2,614.18. This comes out to $435.70 per toilet retrofitted. Many higher-tech commercial composting toilets, like the <Misspelt>Envirolet</Misspelt> toilet<br />manufactured in Canada, cost several thousand dollars per unit to install.</p>
      <p>Unfortunately, the short-term economic benefits for retrofitting are not sufficient, perhaps rendering this proposal idea ineligible. But is there a<br />moral argument to be made?</p>
      <h2 className="font-bold">References</h2>
      <p>Campus Planning &amp; Sustainability. (2016). Energy and water savings projects application. <i>University of Victoria</i>. Retrieved from<br /><DocLink href="https://www.uvic.ca/sustainability/involved/sustainability-fund/application/index.php" /></p>
      <p><Misspelt>Ddiba</Misspelt>, D. (2016). <i>Estimating the potential for resource recovery from productive sanitation in urban areas.</i><br /><DocLink href="https://doi.org/10.13140/RG.2.1.4987.2881" /></p>
      <p><Misspelt>Envirolet</Misspelt> Eco Sanitation Systems. Retrieved from <DocLink href="https://www.envirolet.ca/" /></p>
    </div>
  </div>
);

const WordScrollbar = () => (
  <div className="flex w-4 flex-col bg-[#dadada] pr-px">
    <button aria-label="Scroll up" className="mt-0.5 flex h-[15px] items-center justify-center border border-[#ababab] bg-white"><svg viewBox="0 0 8 5" className="h-[5px] w-2" fill="#777"><path d="M0 5l4-5 4 5z" /></svg></button>
    <div className="flex-[181]" />
    <div className="flex-[97] border border-[#ababab] bg-white" />
    <div className="flex-[237]" />
    <button aria-label="Scroll down" className="mb-0.5 flex h-[15px] items-center justify-center border border-[#c6c6c6] bg-white"><CaretDown className="h-[5px] w-2 text-[#777]" /></button>
  </div>
);

const StatusBar = () => (
  <div className="flex h-[22px] items-center border-t border-[#c8c8c8] bg-[#f1f1f1] text-[11px] text-[#555]">
    <span className="ml-2 w-[76px]">Page 2 of 3</span>
    <span className="w-[72px]">650 words</span>
    <svg viewBox="0 0 15 13" className="mr-[17px] h-[13px] w-[15px]" fill="none" stroke="#666"><path d="M7 2C5 .500 3 .500.500.500v10c3 0 4.500 0 6.500 2V2c1-1 2-1.500 3-1.500M9 4l4.500 5.500M13.500 4L9 9.500M14 .500v2M14 11v-1M7 12.500c1-1.200 2.500-1.700 4-2" /></svg>
    <span>English (Canada)</span>
    <div className="ml-auto flex h-full items-center">
      <button aria-label="Read mode" className="mr-[13px]"><svg viewBox="0 0 13 12" className="h-3 w-[13px]" fill="none" stroke="#666"><path d="M6.500 1.500L.5.500v10l6 1 6-1v-10zM6.500 1.500v10M2 3.500h3M2 5.500h3M2 7.500h3M8 3.500h3M8 5.500h3M8 7.500h3" /></svg></button>
      <button aria-label="Print layout" className="flex h-full w-[38px] items-center justify-center bg-[#c9c9c9]"><svg viewBox="0 0 14 13" className="h-[13px] w-3.5" fill="none" stroke="#555"><path d="M.5.500h13v12H.5zM3 3.500h8M3 5.500h8M3 7.500h8M3 9.500h8" /></svg></button>
      <button aria-label="Web layout" className="mr-[15px] ml-3"><svg viewBox="0 0 14 13" className="h-[13px] w-3.5" fill="none" stroke="#666"><path d="M6 11.500H.5V.500h11V5M2.500 3h7M2.500 5.500h5M2.500 8h4" /><circle cx="10" cy="9.500" r="3" fill="#888" /></svg></button>
      <button aria-label="Zoom out"><svg viewBox="0 0 7 9" className="h-[9px] w-[7px]"><path d="M0 4h7v2H0z" fill="#555" /></svg></button>
      <input type="range" aria-label="Zoom" min="0" max="100" defaultValue="52" className="mx-1 h-3 w-[101px] appearance-none bg-[linear-gradient(#a8a8a8,#a8a8a8)] bg-[length:100%_1px] bg-center bg-no-repeat [&::-webkit-slider-thumb]:h-[11px] [&::-webkit-slider-thumb]:w-1 [&::-webkit-slider-thumb]:appearance-none [&::-webkit-slider-thumb]:bg-[#555]" />
      <button aria-label="Zoom in"><svg viewBox="0 0 9 9" className="h-[9px] w-[9px]"><path d="M0 3.500h3.500V0h2v3.500H9v2H5.500V9h-2V5.500H0z" fill="#555" /></svg></button>
      <span className="mr-2 ml-4">110%</span>
    </div>
  </div>
);

const WordWindow = () => (
  <div className="flex flex-col bg-[#2a5699]">
    <WordTitleBar />
    <WordTabs />
    <Ribbon />
    <div className="flex bg-[#e6e6e6]">
      <div className="flex min-w-0 flex-1 flex-col">
        <div className="flex h-6 items-start">
          <div className="flex h-5 w-[22px] items-center justify-center border-2 border-[#d8d8d8] bg-white"><svg viewBox="0 0 6 6" className="h-1.5 w-1.5"><path d="M0 0h2v4h4v2H0z" fill="#666" /></svg></div>
          <HorizontalRuler />
        </div>
        <div className="flex">
          <div className="w-[103px]"><VerticalRuler /></div>
          <DocumentPage />
          <div className="w-[81px]" />
        </div>
      </div>
      <WordScrollbar />
    </div>
    <StatusBar />
  </div>
);

/* ---------- Firefox ---------- */

const MENU: [string, string, string][] = [['', 'F', 'ile'], ['', 'E', 'dit'], ['', 'V', 'iew'], ['Hi', 's', 'tory'], ['', 'B', 'ookmarks'], ['', 'T', 'ools'], ['', 'H', 'elp']];

const BrowserTop = () => (
  <div className="flex h-[29px] items-start justify-between bg-[#20233f] text-[11px] text-[#adaebb]">
    <nav className="flex gap-3 pt-[3px] pl-1.5 leading-[14px]">
      {MENU.map(([a, b, c]) => <button key={b + c}>{a}<u>{b}</u>{c}</button>)}
    </nav>
    <div className="flex gap-[35px] pt-2 pr-[17px] text-[#9a9bad]">
      <button aria-label="Minimize"><MinimizeIcon /></button>
      <button aria-label="Restore"><RestoreIcon /></button>
      <button aria-label="Close"><CloseIcon /></button>
    </div>
  </div>
);

const TabClose = ({ label }: { label: string }) => (
  <button aria-label={`Close ${label}`} className="ml-auto shrink-0"><CloseIcon className="h-2.5 w-2.5 stroke-[1.7]" /></button>
);

const BrowserTabs = () => (
  <div className="flex h-8 items-stretch bg-[#20233f] text-[11px] text-[#adaebb]">
    <div className="flex w-[225px] items-center border-b border-[#15172b] pr-3 pl-[9px]">
      <span className="flex h-4 w-4 items-center justify-center bg-[#1d6b1d] text-sm leading-none font-extrabold text-white">H</span>
      <span className="ml-1.5">HTML Text Editor</span>
      <TabClose label="HTML Text Editor" />
    </div>
    <div className="flex w-56 items-center border-t-2 border-[#2f7cd6] bg-[#f9f9fb] pr-3 pl-2.5 text-[#6a6b76]">
      <span>cmrems</span>
      <TabClose label="cmrems" />
    </div>
    <div className="flex w-[225px] items-center border-b border-[#15172b] pr-3 pl-2.5">
      <FaGithub className="h-4 w-4 shrink-0 text-[#14161f]" />
      <span className="mr-2 ml-1.5 overflow-hidden [mask-image:linear-gradient(90deg,#000_85%,transparent)] whitespace-nowrap">cmrems/style2.css at gh-pages</span>
      <TabClose label="cmrems/style2.css" />
    </div>
    <div className="flex flex-1 items-center border-b border-[#15172b]">
      <span className="h-6 w-px bg-[#5a5c74]" />
      <button aria-label="New tab" className="ml-2.5"><svg viewBox="0 0 13 13" className="h-[13px] w-[13px]" stroke="#d5d5dd" strokeWidth="1.600"><path d="M6.500 0v13M0 6.500h13" /></svg></button>
    </div>
  </div>
);

const Tool = ({ label, children }: { label: string; children: React.ReactNode }) => (
  <button aria-label={label} className="flex h-8 w-8 items-center justify-center">{children}</button>
);

const NavBar = () => (
  <div className="flex h-[41px] items-center bg-[#f9f9fb] pl-[3px] text-[#4a4a4f]">
    <button aria-label="Back" className="flex h-[34px] w-[34px] items-center justify-center rounded-full border border-[#b1b1b3] bg-white"><svg viewBox="0 0 16 14" className="h-3.5 w-4" fill="none" stroke="currentColor" strokeWidth="2"><path d="M7.500 1L1.500 7l6 6M1.500 7H16" /></svg></button>
    <Tool label="Forward"><svg viewBox="0 0 16 14" className="h-3.5 w-4" fill="none" stroke="#b8b8bc" strokeWidth="2"><path d="M8.500 1l6 6-6 6M14.500 7H0" /></svg></Tool>
    <Tool label="Reload"><svg viewBox="0 0 16 16" className="h-4 w-4" fill="none" stroke="currentColor" strokeWidth="2"><path d="M13.500 10.500A6 6 0 1 1 12 3.500l2 2" /><path d="M15.500.500V7H9z" fill="currentColor" stroke="none" /></svg></Tool>
    <Tool label="Home"><svg viewBox="0 0 16 16" className="h-4 w-4" fill="none" stroke="currentColor" strokeWidth="1.900"><path d="M.7 8.500L8 1.200l7.300 7.300M3 8v7h10V8M11.500 1.500V4" /><path d="M7 9.500h2v4.500H7z" fill="currentColor" /></svg></Tool>
    <div className="ml-[116px] flex h-[30px] flex-1 items-center border border-[#bcbcbe] bg-white pl-[9px]">
      <svg viewBox="0 0 14 14" className="h-3.5 w-3.5 shrink-0" fill="none" stroke="#6f6f74" strokeWidth="1.100"><circle cx="7" cy="7" r="6.300" /><path d="M7 6v4.500M7 3.300v1.500" strokeWidth="1.700" /></svg>
      <input aria-label="Address" defaultValue="claireremington.com/blog/blog.html" className="ml-2.5 min-w-0 flex-1 bg-[linear-gradient(90deg,#0c0c0d_124px,#8b8b90_124px)] bg-clip-text text-[13px] text-transparent outline-none" />
      <button aria-label="Reader view" className="mr-3"><svg viewBox="0 0 14 16" className="h-4 w-3.5" fill="none" stroke="#68686d" strokeWidth="1.600"><rect x=".8" y=".8" width="12.400" height="14.400" rx="1.500" /><path d="M3.500 4.500h7M3.500 6.800h7M3.500 9h7M3.500 11.300h4" strokeWidth="1" /></svg></button>
      <span className="h-[22px] w-px bg-[#d7d7db]" />
      <button aria-label="Page actions" className="ml-3"><svg viewBox="0 0 16 4" className="h-1 w-4" fill="#68686d"><circle cx="2" cy="2" r="2" /><circle cx="8" cy="2" r="2" /><circle cx="14" cy="2" r="2" /></svg></button>
      <button aria-label="Save to Pocket" className="ml-3"><svg viewBox="0 0 16 15" className="h-[15px] w-4" fill="#68686d"><path d="M1.500.500h13A1.500 1.500 0 0 1 16 2v4.500a8 8 0 0 1-16 0V2A1.500 1.500 0 0 1 1.500.500z" /><path d="M4 5l4 4 4-4" fill="none" stroke="#fff" strokeWidth="2" strokeLinecap="round" /></svg></button>
      <button aria-label="Bookmark" className="mr-1.5 ml-3"><svg viewBox="0 0 16 16" className="h-4 w-4" fill="none" stroke="#68686d" strokeWidth="1.700" strokeLinejoin="round"><path d="M8 1.200l2.100 4.500 4.900.6-3.600 3.300 1 4.900L8 12.100l-4.400 2.400 1-4.900L1 6.300l4.900-.6z" /></svg></button>
    </div>
    <div className="ml-[117px] flex items-center">
      <Tool label="Downloads"><svg viewBox="0 0 14 16" className="h-4 w-3.5" fill="none" stroke="currentColor" strokeWidth="1.900"><path d="M7 0v11M2 6.500L7 11.500l5-5M1 15h12" /></svg></Tool>
      <Tool label="Library"><svg viewBox="0 0 16 14" className="h-3.5 w-4" fill="none" stroke="currentColor" strokeWidth="1.700"><path d="M1.500 0v14M4.800 2v12M8 0v14M10.500.500L15 13.700" /></svg></Tool>
      <Tool label="Sidebar"><svg viewBox="0 0 16 14" className="h-3.5 w-4" fill="none" stroke="currentColor" strokeWidth="1.800"><rect x=".9" y=".9" width="14.200" height="12.200" rx="2" /><path d="M8 1v12" /><path d="M3 4h3M3 6.500h3M3 9h3" strokeWidth="1" /></svg></Tool>
      <Tool label="Clipper"><span className="flex h-4 w-4 items-center justify-center rounded-full bg-[#b5b5b7] text-[10px] font-extrabold text-white">C</span></Tool>
      <Tool label="Notes"><svg viewBox="0 0 16 16" className="h-4 w-4"><rect width="16" height="16" rx="1" fill="#fbbc05" /><g fill="#fff"><circle cx="3.500" cy="8" r="1.200" /><circle cx="7" cy="8" r="1.200" /><circle cx="10.500" cy="8" r="1.200" /><path d="M13 5.500h1v5h-1z" /></g></svg></Tool>
      <Tool label="Tomato clock"><svg viewBox="0 0 16 16" className="h-4 w-4"><ellipse cx="8" cy="8.500" rx="8" ry="7.500" fill="#f20d0d" /><path d="M8 1v5M4 3.500l3 .5-2 2.500M12 3.500L9 4l2 2.500" stroke="#fff" fill="none" strokeWidth=".9" /></svg></Tool>
      <Tool label="Scholar"><svg viewBox="0 0 16 9" className="h-[9px] w-4" fill="none" strokeWidth="2.800"><path d="M.8 8L4 4.500" stroke="#2aa174" /><path d="M3.500 5L7 2.500" stroke="#2b5a95" /><path d="M6.500 2.800Q9 .800 11 2.500" stroke="#f0a238" /><path d="M10.500 2.200L13 4.500" stroke="#e2543a" /><path d="M12.500 4l2.700 3.500" stroke="#2b5a95" /></svg></Tool>
    </div>
    <span className="ml-[3px] h-9 w-px bg-[#d7d7db]" />
    <button aria-label="Menu" className="mr-3 ml-3"><svg viewBox="0 0 13 13" className="h-[13px] w-[13px]" stroke="currentColor" strokeWidth="2"><path d="M0 1.500h13M0 6.500h13M0 11.500h13" /></svg></button>
  </div>
);

const BookmarksBar = () => (
  <div className="flex h-[23px] items-center border-b border-[#dcdcde] bg-[#f9f9fb] pb-0.5 pl-3 text-[11px] text-[#111]">
    <a href="#most-visited" className="flex items-center gap-1.5">
      <svg viewBox="0 0 14 14" className="h-3.5 w-3.5" fill="none" stroke="#4a4a4f"><circle cx="7" cy="7" r="3.900" strokeWidth="2" /><path d="M7 0v3M7 11v3M0 7h3M11 7h3M2 2l2 2M10 10l2 2M12 2l-2 2M4 10l-2 2" strokeWidth="1.900" /></svg>
      Most Visited
    </a>
    <a href="#bookshelf" className="ml-4 flex items-center gap-1.5">
      <svg viewBox="0 0 12 16" className="h-4 w-3"><path d="M1 4l6-4 2 1v3h2v11H1z" fill="#f58a2c" /><path d="M1 4l6-4 1 .5V4z" fill="#b9501c" /><path d="M4 5h3v4L5.500 8 4 9z" fill="#fff" /></svg>
      Bookshelf Online: Sign...
    </a>
  </div>
);

const Article = () => (
  <article className="mx-auto w-[568px] pt-[89px] text-[21px] leading-8 whitespace-nowrap text-[#3a3c3f]">
    <h1 className="mb-5">Urban Ecological Infrastructure &amp; Design</h1>
    <p className="mb-5">A contemporary city is a “node of energy and material<br />consumption,” but it is not sustainable in the sense that<br />the ecological footprint (in terms of natural capital)<br />needed to support the urban population is several<br />hundreds time greater than the city’s physical footprint<br />(Rees, 1996). Cities pull on ecological resources and<br />dispose of waste far outside the physical limits of the city.</p>
    <p>It has been suggested that urban sustainability will<br />require no less than the reconstruction of our cities, and<br />that sustainable urban (re)design will need to consider<br />the “resource flows for neighborhood developments or<br />entire cities,” or in other words, “to design the urban<br />metabolism of sustainable cities” (Kennedy, 2011). This<br />kind of thinking requires planners and engineers to<br />consider how retrofits to physical infrastructure can be<br />ecologically regenerative i.e. by integrating water-based,<br />vegetative, and non-living landscapes in such a way as to<br />provide urban residents with the ecosystem services they<br />need while also increasing a city’s ecological integrity.</p>
  </article>
);

const BrowserPage = () => (
  <div className="flex min-h-0 flex-1 bg-white py-3 pr-3">
    <main className="min-w-0 flex-1 overflow-hidden font-['Inter',sans-serif]">
      <div className="pt-[78px] pl-[90px]">
        <a href="#home" className="inline-flex h-16 w-[246px] items-center justify-center border-4 border-[#0d67f2] text-5xl text-[#0d67f2]">CMREMS</a>
      </div>
      <Article />
    </main>
    <div className="flex w-4 flex-col bg-[#f0f0f0]">
      <button aria-label="Scroll up" className="flex h-[18px] items-center justify-center"><svg viewBox="0 0 8 6" className="h-1.5 w-2" fill="none" stroke="#555" strokeWidth="2"><path d="M.5 5.200L4 1.500l3.500 3.700" /></svg></button>
      <div className="h-[20%] bg-[#cdcdcd]" />
      <button aria-label="Scroll down" className="mt-auto flex h-[18px] items-center justify-center"><svg viewBox="0 0 8 6" className="h-1.5 w-2" fill="none" stroke="#555" strokeWidth="2"><path d="M.5.800L4 4.500 7.500.800" /></svg></button>
    </div>
  </div>
);

export default function App() {
  return (
    <div className="grid h-screen grid-cols-[1366fr_1920fr] bg-black font-['Open_Sans',sans-serif]">
      <div className="min-w-0">
        <WordWindow />
        <LeftTaskbar />
      </div>
      <div className="flex h-screen min-w-0 flex-col">
        <BrowserTop />
        <BrowserTabs />
        <NavBar />
        <BookmarksBar />
        <BrowserPage />
        <RightTaskbar />
      </div>
    </div>
  );
}
